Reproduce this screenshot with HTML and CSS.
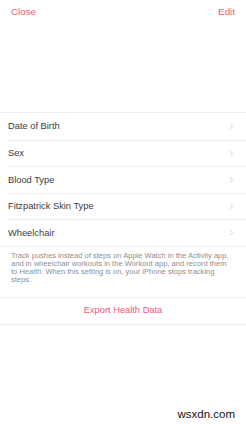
FILE: index.html
```html
<!DOCTYPE html>
<html lang="en">

<head>
    <meta charset="UTF-8">
    <meta name="viewport" content="width=device-width, initial-scale=1.0">
    <title>Health Profile</title>
    <link rel="stylesheet" href="styles.css">
</head>

<body>

    <div class="screen">
        <header class="nav-bar">
            <span class="nav-button">Close</span>
            <span class="nav-button">Edit</span>
        </header>

        <section class="profile-list">
            <div class="profile-row">
                <span class="profile-label">Date of Birth</span>
                <svg class="chevron" viewBox="0 0 5 8"><path d="M1 1l3 3-3 3" /></svg>
            </div>
            <div class="profile-row">
                <span class="profile-label">Sex</span>
                <svg class="chevron" viewBox="0 0 5 8"><path d="M1 1l3 3-3 3" /></svg>
            </div>
            <div class="profile-row">
                <span class="profile-label">Blood Type</span>
                <svg class="chevron" viewBox="0 0 5 8"><path d="M1 1l3 3-3 3" /></svg>
            </div>
            <div class="profile-row">
                <span class="profile-label">Fitzpatrick Skin Type</span>
                <svg class="chevron" viewBox="0 0 5 8"><path d="M1 1l3 3-3 3" /></svg>
            </div>
            <div class="profile-row">
                <span class="profile-label">Wheelchair</span>
                <svg class="chevron" viewBox="0 0 5 8"><path d="M1 1l3 3-3 3" /></svg>
            </div>
        </section>

        <p class="list-note">
            Track pushes instead of steps on Apple Watch in the Activity app, and in wheelchair workouts in the Workout app, and record them to Health. When this setting is on, your iPhone stops tracking steps.
        </p>

        <section class="export-group">
            <div class="export-button">Export Health Data</div>
        </section>

        <div class="watermark">wsxdn.com</div>
    </div>

</body>

</html>
```

FILE: styles.css
```css
html {
    box-sizing: border-box;
}

*,
*::before,
*::after {
    box-sizing: inherit;
    margin: 0;
    padding: 0;
}

body {
    background: #fff;
    font-family: 'Liberation Sans', Arial, sans-serif;
}

.screen {
    height: 424px;
    position: relative;
    overflow: hidden;
}

.nav-bar {
    display: flex;
    justify-content: space-between;
    padding: 6px 11px 0 11px;
    height: 112px;
}

.nav-button {
    color: #f4587a;
    font-size: 9.8px;
    line-height: 12px;
}

.profile-list {
    border-top: 1px solid #ececee;
    border-bottom: 1px solid #ececee;
}

.profile-row {
    align-items: center;
    display: flex;
    height: 26.5px;
    justify-content: space-between;
    margin-left: 8px;
    padding-right: 12px;
}

.profile-row + .profile-row {
    border-top: 1px solid #ececee;
}

.profile-label {
    color: #3a3a3c;
    font-size: 9.3px;
}

.chevron {
    fill: none;
    height: 7px;
    stroke: #c8c8cd;
    stroke-width: 1;
    width: 5px;
}

.list-note {
    color: #8e8e93;
    font-size: 7.55px;
    line-height: 8.2px;
    padding: 5px 12px 0 11px;
    height: 50px;
}

.export-group {
    border-top: 1px solid #ececee;
    border-bottom: 1px solid #ececee;
}

.export-button {
    color: #f4587a;
    font-size: 9.3px;
    height: 26px;
    line-height: 25px;
    text-align: center;
}

.watermark {
    bottom: 4px;
    color: #111;
    font-family: 'Liberation Sans', sans-serif;
    font-size: 11.5px;
    position: absolute;
    right: 11px;
}
```
